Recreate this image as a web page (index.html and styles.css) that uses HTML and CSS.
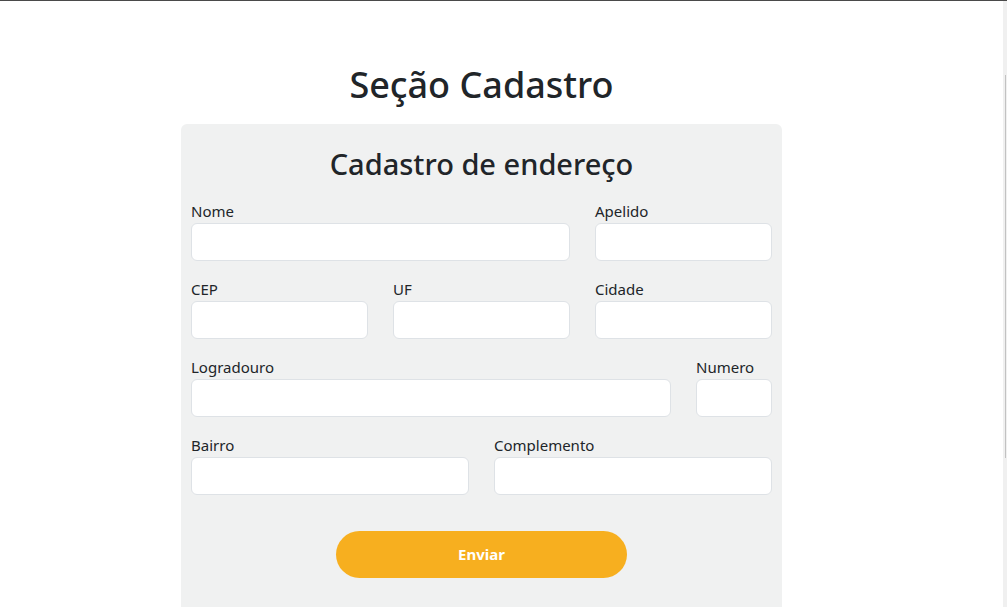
FILE: index.html
```html
<!DOCTYPE html>
<html lang="pt-BR">
<head>
<meta charset="utf-8">
<title>Seção Cadastro</title>
<link rel="stylesheet" href="styles.css">
</head>
<body>
<div class="topline"></div>
<main class="page">
  <h1 class="page-title">Seção Cadastro</h1>
  <section class="card">
    <h2 class="card-title">Cadastro de endereço</h2>
    <form class="form-grid">
      <div class="field span-4"><label>Nome</label><input type="text"></div>
      <div class="field span-2"><label>Apelido</label><input type="text"></div>
      <div class="field span-2"><label>CEP</label><input type="text"></div>
      <div class="field span-2"><label>UF</label><input type="text"></div>
      <div class="field span-2"><label>Cidade</label><input type="text"></div>
      <div class="field span-5"><label>Logradouro</label><input type="text"></div>
      <div class="field span-1"><label>Numero</label><input type="text"></div>
      <div class="field span-3"><label>Bairro</label><input type="text"></div>
      <div class="field span-3"><label>Complemento</label><input type="text"></div>
      <div class="actions"><button type="button" class="btn">Enviar</button></div>
    </form>
  </section>
</main>
<div class="scrollbar"><div class="thumb"></div></div>
</body>
</html>
```
FILE: styles.css
```css
html, body {
  margin: 0;
  padding: 0;
  background: #ffffff;
  overflow: hidden;
  height: 100%;
}
body {
  font-family: "Noto Sans", "Open Sans", sans-serif;
  color: #212529;
}
.topline {
  height: 1px;
  background: #4a4a4a;
}
.page {
  width: 601px;
  margin-left: 181px;
  padding-top: 62px;
}
.page-title {
  margin: 0 0 18px;
  font-size: 36px;
  font-weight: 500;
  line-height: 1.2;
  text-align: center;
}
.card {
  background: #f0f1f1;
  border-radius: 6px;
  padding: 23px 10px 40px;
}
.card-title {
  margin: 0 0 17px;
  font-size: 29px;
  font-weight: 500;
  line-height: 1.2;
  text-align: center;
}
.form-grid {
  display: grid;
  grid-template-columns: repeat(6, 1fr);
  column-gap: 25px;
  row-gap: 16px;
}
.field {
  display: flex;
  flex-direction: column;
}
.field label {
  font-size: 15px;
  line-height: 24px;
}
.field input {
  box-sizing: border-box;
  height: 38px;
  width: 100%;
  border: 1px solid #dee2e6;
  border-radius: 6px;
  background: #ffffff;
  font: inherit;
  padding: 6px 12px;
}
.span-1 { grid-column: span 1; }
.span-2 { grid-column: span 2; }
.span-3 { grid-column: span 3; }
.span-4 { grid-column: span 4; }
.span-5 { grid-column: span 5; }
.actions {
  grid-column: 1 / -1;
  display: flex;
  justify-content: center;
  padding-top: 20px;
}
.btn {
  width: 50%;
  height: 47px;
  border: none;
  border-radius: 24px;
  background: #f7af1f;
  color: #ffffff;
  font-family: inherit;
  font-size: 15px;
  font-weight: 700;
}
.scrollbar {
  position: fixed;
  top: 1px;
  right: 0;
  width: 4px;
  height: 606px;
  background: #f0f0f0;
}
.thumb {
  margin-top: 74px;
  margin-left: 2px;
  width: 1px;
  height: 383px;
  background: #c2c2c2;
}
```
